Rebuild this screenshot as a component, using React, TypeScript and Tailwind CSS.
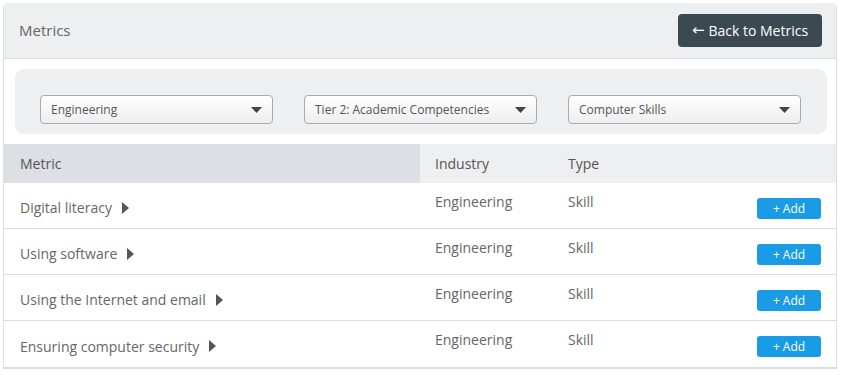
import React from "react";

const rows = [
  "Digital literacy",
  "Using software",
  "Using the Internet and email",
  "Ensuring computer security",
];

function Select({ label }: { label: string }) {
  return (
    <div className="flex h-[29px] w-[233px] items-center justify-between rounded-[4px] border border-[#aaaaaa] bg-gradient-to-b from-white to-[#eeeeee] pl-[10px] pr-[10px] text-[12px] text-[#555]">
      <span>{label}</span>
      <svg width="11" height="6" viewBox="0 0 11 6">
        <path d="M0 0 L11 0 L5.5 6 Z" fill="#444" />
      </svg>
    </div>
  );
}

export default function App() {
  return (
    <div className="min-h-[375px] bg-white pl-[3px] pt-[3px]" style={{ fontFamily: '"Open Sans", sans-serif' }}>
      <div className="w-[834px] overflow-hidden rounded-t-[5px] border-x border-[#dcdcdc]">
        <div className="flex h-[56px] items-center justify-between border-b border-[#dcdcdc] bg-[#eeeff1] pl-[15px] pr-[14px]">
          <span className="text-[15px] text-[#666]">Metrics</span>
          <button className="flex h-[33px] w-[144px] items-center justify-center gap-[4px] rounded-[4px] bg-[#3b4a51] text-[14px] text-white">
            <span className="text-[15px] leading-none" style={{ fontFamily: '"DejaVu Sans", sans-serif' }}>←</span>
            <span>Back to Metrics</span>
          </button>
        </div>
        <div className="bg-white pt-[10px]">
          <div className="ml-[11px] mr-[9px] flex justify-between rounded-[9px] bg-[#eeeff1] pb-[10px] pl-[25px] pr-[26px] pt-[26px]">
            <Select label="Engineering" />
            <Select label="Tier 2: Academic Competencies" />
            <Select label="Computer Skills" />
          </div>
          <div className="mt-[10px] border-b-2 border-[#dcdcdc]">
            <div className="flex h-[39px] items-center bg-[#eeeff1] text-[14px] text-[#555]">
              <div className="flex h-full w-[416px] items-center bg-[#dcdfe3] pl-[16px]">Metric</div>
              <div className="w-[133px] pl-[15px]">Industry</div>
              <div className="pl-[15px]">Type</div>
            </div>
            {rows.map((r, i) => (
              <div
                key={r}
                className={`flex h-[46px] text-[14px] text-[#666] ${i < rows.length - 1 ? "border-b border-[#dcdcdc]" : ""}`}
              >
                <div className="flex w-[416px] items-center gap-[10px] pl-[16px] pt-[4px]">
                  <span>{r}</span>
                  <svg width="7" height="12" viewBox="0 0 7 12">
                    <path d="M0 0 L7 6 L0 12 Z" fill="#555" />
                  </svg>
                </div>
                <div className="w-[133px] pl-[15px] pt-[8px]">Engineering</div>
                <div className="pl-[15px] pt-[8px]">Skill</div>
                <div className="ml-auto pr-[15px] pt-[15px]">
                  <button className="flex h-[21px] w-[64px] items-center justify-center rounded-[3px] bg-[#1a9be5] text-[12px] text-white">
                    + Add
                  </button>
                </div>
              </div>
            ))}
          </div>
        </div>
      </div>
    </div>
  );
}
